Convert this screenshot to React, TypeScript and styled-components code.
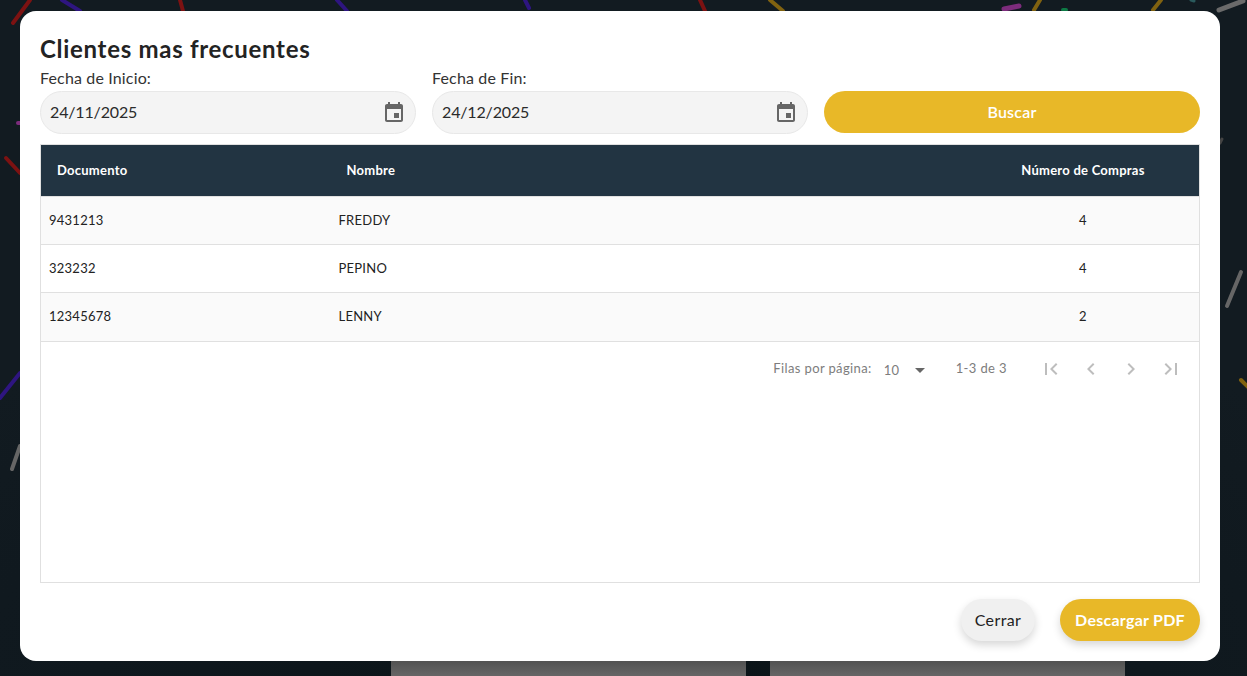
import React from "react";
import styled, { createGlobalStyle } from "styled-components";

const Global = createGlobalStyle`
  html, body { margin: 0; padding: 0; height: 100%; overflow: hidden; background: #10191f; }
  * { box-sizing: border-box; }
  body { font-family: "Lato", "Noto Sans", sans-serif; }
`;

const Page = styled.div`
  position: relative;
  width: 100%;
  height: 676px;
  overflow: hidden;
  background: radial-gradient(ellipse 70% 60% at 50% 100%, #0a1317 0%, #0f181e 60%, #121b21 100%), #121b21;
  padding: 11px 27px 15px 20px;
`;
const Streaks = styled.svg`
  position: absolute;
  inset: 0;
  width: 1247px;
  height: 676px;
  filter: blur(0.6px);
`;
const BackCards = styled.div`
  position: absolute;
  left: 391px;
  top: 640px;
  display: flex;
  gap: 24px;
`;
const BackCard = styled.div`
  width: 355px;
  height: 36px;
  background: linear-gradient(180deg, #363636 0%, #666 100%);
`;
const Modal = styled.section`
  position: relative;
  width: 1200px;
  height: 650px;
  background: #fff;
  border-radius: 16px;
  padding: 20px;
  display: flex;
  flex-direction: column;
  color: #222;
`;
const Title = styled.h2`
  margin: 4px 0 0;
  font-size: 24px;
  line-height: 28px;
  font-weight: 700;
  letter-spacing: 0.7px;
  color: #232323;
`;
const Filters = styled.div`
  display: grid;
  grid-template-columns: repeat(3, 376px);
  gap: 16px;
  margin-top: 4px;
  align-items: end;
`;
const Field = styled.label`
  display: flex;
  flex-direction: column;
  font-size: 16px;
  line-height: 21px;
  letter-spacing: 0.15px;
  color: #333;
`;
const DateBox = styled.div`
  margin-top: 3px;
  height: 43px;
  border: 1px solid #e8e8e8;
  border-radius: 22px;
  background: #f4f4f4;
  display: flex;
  align-items: center;
  justify-content: space-between;
  padding: 0 9px;
  font-size: 16px;
  letter-spacing: -0.15px;
  color: #2b2b2b;
`;
const DateText = styled.span`
  padding-bottom: 2px;
`;
const CalendarIcon = styled.svg`
  width: 24px;
  height: 24px;
  fill: #666;
`;
const SearchButton = styled.button`
  height: 42px;
  margin-bottom: 1px;
  padding: 0 0 2px;
  border: 0;
  border-radius: 21px;
  background: #e8b828;
  color: #fff;
  font: 600 16px "Lato", sans-serif;
  letter-spacing: 0.2px;
`;
const TableBox = styled.div`
  margin-top: 10px;
  height: 439px;
  border: 1px solid #e0e0e0;
  display: flex;
  flex-direction: column;
`;
const Row = styled.div<{ $head?: boolean; $odd?: boolean; $h: number }>`
  display: grid;
  grid-template-columns: 289.5px 1fr 232px;
  align-items: center;
  height: ${(p) => p.$h}px;
  flex: none;
  padding-bottom: 2px;
  border-bottom: 1px solid #e0e0e0;
  background: ${(p) => (p.$head ? "#223442" : p.$odd ? "#fafafa" : "#fff")};
  color: ${(p) => (p.$head ? "#fff" : "#222")};
  font-size: 13px;
  font-weight: ${(p) => (p.$head ? 700 : 400)};
  letter-spacing: 0.25px;
`;
const Cell = styled.div<{ $head?: boolean; $center?: boolean }>`
  padding: 0 ${(p) => (p.$head ? 16 : 8)}px;
  text-align: ${(p) => (p.$center ? "center" : "left")};
`;
const Pager = styled.div`
  display: flex;
  align-items: center;
  justify-content: flex-end;
  height: 54px;
  padding: 0 16px 0 0;
  font-size: 13px;
  letter-spacing: 0.38px;
  color: #7d7d7d;
`;
const PagerText = styled.span`
  padding-bottom: 3px;
`;
const PageSize = styled.span`
  display: inline-flex;
  align-items: center;
  justify-content: space-between;
  width: 48px;
  margin: 2px 24px 0 12px;
  letter-spacing: 0.2px;
`;
const Caret = styled.svg`
  width: 24px;
  height: 24px;
  fill: #666;
`;
const PagerButtons = styled.div`
  display: flex;
  gap: 16px;
  margin-left: 32px;
`;
const PagerIcon = styled.svg`
  width: 24px;
  height: 24px;
  fill: rgba(0, 0, 0, 0.26);
`;
const Footer = styled.div`
  display: flex;
  justify-content: flex-end;
  gap: 25px;
  margin-top: 16px;
`;
const Action = styled.button<{ $primary?: boolean }>`
  width: ${(p) => (p.$primary ? 140 : 74)}px;
  height: 42px;
  padding: 0 0 2px;
  border: 0;
  border-radius: 21px;
  background: ${(p) => (p.$primary ? "#e8b828" : "#f0f0f0")};
  color: ${(p) => (p.$primary ? "#fff" : "#222")};
  font: ${(p) => (p.$primary ? 700 : 400)} 16px "Lato", sans-serif;
  letter-spacing: ${(p) => (p.$primary ? 0.25 : 0.4)}px;
  box-shadow: 0 4px 8px rgba(0, 0, 0, 0.16);
`;

const streaks: [number, number, number, number, string, number][] = [
  [13, 23, 30, 0, "#7c1212", 4],
  [62, 0, 80, 11, "#2e1580", 4],
  [180, 0, 183, 11, "#7c1212", 4],
  [337, 0, 347, 11, "#2e1580", 4],
  [525, 0, 529, 8, "#2e1580", 4],
  [700, 0, 705, 11, "#7c1212", 4],
  [770, 0, 783, 11, "#806210", 4],
  [1004, 9, 1019, 6, "#7c2c7c", 5],
  [1034, 10, 1040, 0, "#806210", 4],
  [1063, 10, 1066, 10, "#0d7a45", 4],
  [1153, 10, 1161, 0, "#806210", 4],
  [1191, 0, 1194, 1, "#2a5a5c", 3],
  [1219, 10, 1243, 1, "#6a6a6a", 5],
  [1220, 143, 1222, 139, "#444", 3],
  [1227, 306, 1241, 272, "#666", 4],
  [1241, 380, 1250, 389, "#806210", 4],
  [0, 398, 20, 373, "#2e1580", 4],
  [12, 469, 20, 446, "#666", 4],
  [18, 123, 20, 123, "#7c2c7c", 4],
  [6, 158, 20, 173, "#7c1212", 4],
];

const rows = [
  ["9431213", "FREDDY", "4", 48],
  ["323232", "PEPINO", "4", 48],
  ["12345678", "LENNY", "2", 49],
] as const;

const Calendar = () => (
  <CalendarIcon viewBox="0 0 24 24">
    <path d="M17 12h-5v5h5v-5zM16 1v2H8V1H6v2H5c-1.11 0-1.99.9-1.99 2L3 19c0 1.1.89 2 2 2h14c1.1 0 2-.9 2-2V5c0-1.1-.9-2-2-2h-1V1h-2zm3 18H5V8h14v11z" />
  </CalendarIcon>
);

const pagerPaths = [
  "M18.41 16.59L13.82 12l4.59-4.59L17 6l-6 6 6 6zM6 6h2v12H6z",
  "M15.41 7.41L14 6l-6 6 6 6 1.41-1.41L10.83 12z",
  "M10 6L8.59 7.41 13.17 12l-4.58 4.59L10 18l6-6z",
  "M5.59 7.41L10.18 12l-4.59 4.59L7 18l6-6-6-6zM16 6h2v12h-2z",
];

export default function App() {
  return (
    <>
      <Global />
      <Page>
        <Streaks viewBox="0 0 1247 676">
          {streaks.map(([x1, y1, x2, y2, c, w], i) => (
            <line key={i} x1={x1} y1={y1} x2={x2} y2={y2} stroke={c} strokeWidth={w} strokeLinecap="round" />
          ))}
        </Streaks>
        <BackCards>
          <BackCard />
          <BackCard />
        </BackCards>
        <Modal>
          <Title>Clientes mas frecuentes</Title>
          <Filters>
            <Field>
              Fecha de Inicio:
              <DateBox>
                <DateText>24/11/2025</DateText>
                <Calendar />
              </DateBox>
            </Field>
            <Field>
              Fecha de Fin:
              <DateBox>
                <DateText>24/12/2025</DateText>
                <Calendar />
              </DateBox>
            </Field>
            <SearchButton>Buscar</SearchButton>
          </Filters>
          <TableBox>
            <Row $head $h={52}>
              <Cell $head>Documento</Cell>
              <Cell $head>Nombre</Cell>
              <Cell $head $center>Número de Compras</Cell>
            </Row>
            {rows.map(([doc, name, n, h], i) => (
              <Row key={doc} $odd={i % 2 === 0} $h={h}>
                <Cell>{doc}</Cell>
                <Cell>{name}</Cell>
                <Cell $center>{n}</Cell>
              </Row>
            ))}
            <Pager>
              <PagerText>Filas por página:</PagerText>
              <PageSize>
                10
                <Caret viewBox="0 0 24 24">
                  <path d="M7 10l5 5 5-5z" />
                </Caret>
              </PageSize>
              <PagerText>1-3 de 3</PagerText>
              <PagerButtons>
                {pagerPaths.map((d) => (
                  <PagerIcon key={d} viewBox="0 0 24 24">
                    <path d={d} />
                  </PagerIcon>
                ))}
              </PagerButtons>
            </Pager>
          </TableBox>
          <Footer>
            <Action>Cerrar</Action>
            <Action $primary>Descargar PDF</Action>
          </Footer>
        </Modal>
      </Page>
    </>
  );
}
